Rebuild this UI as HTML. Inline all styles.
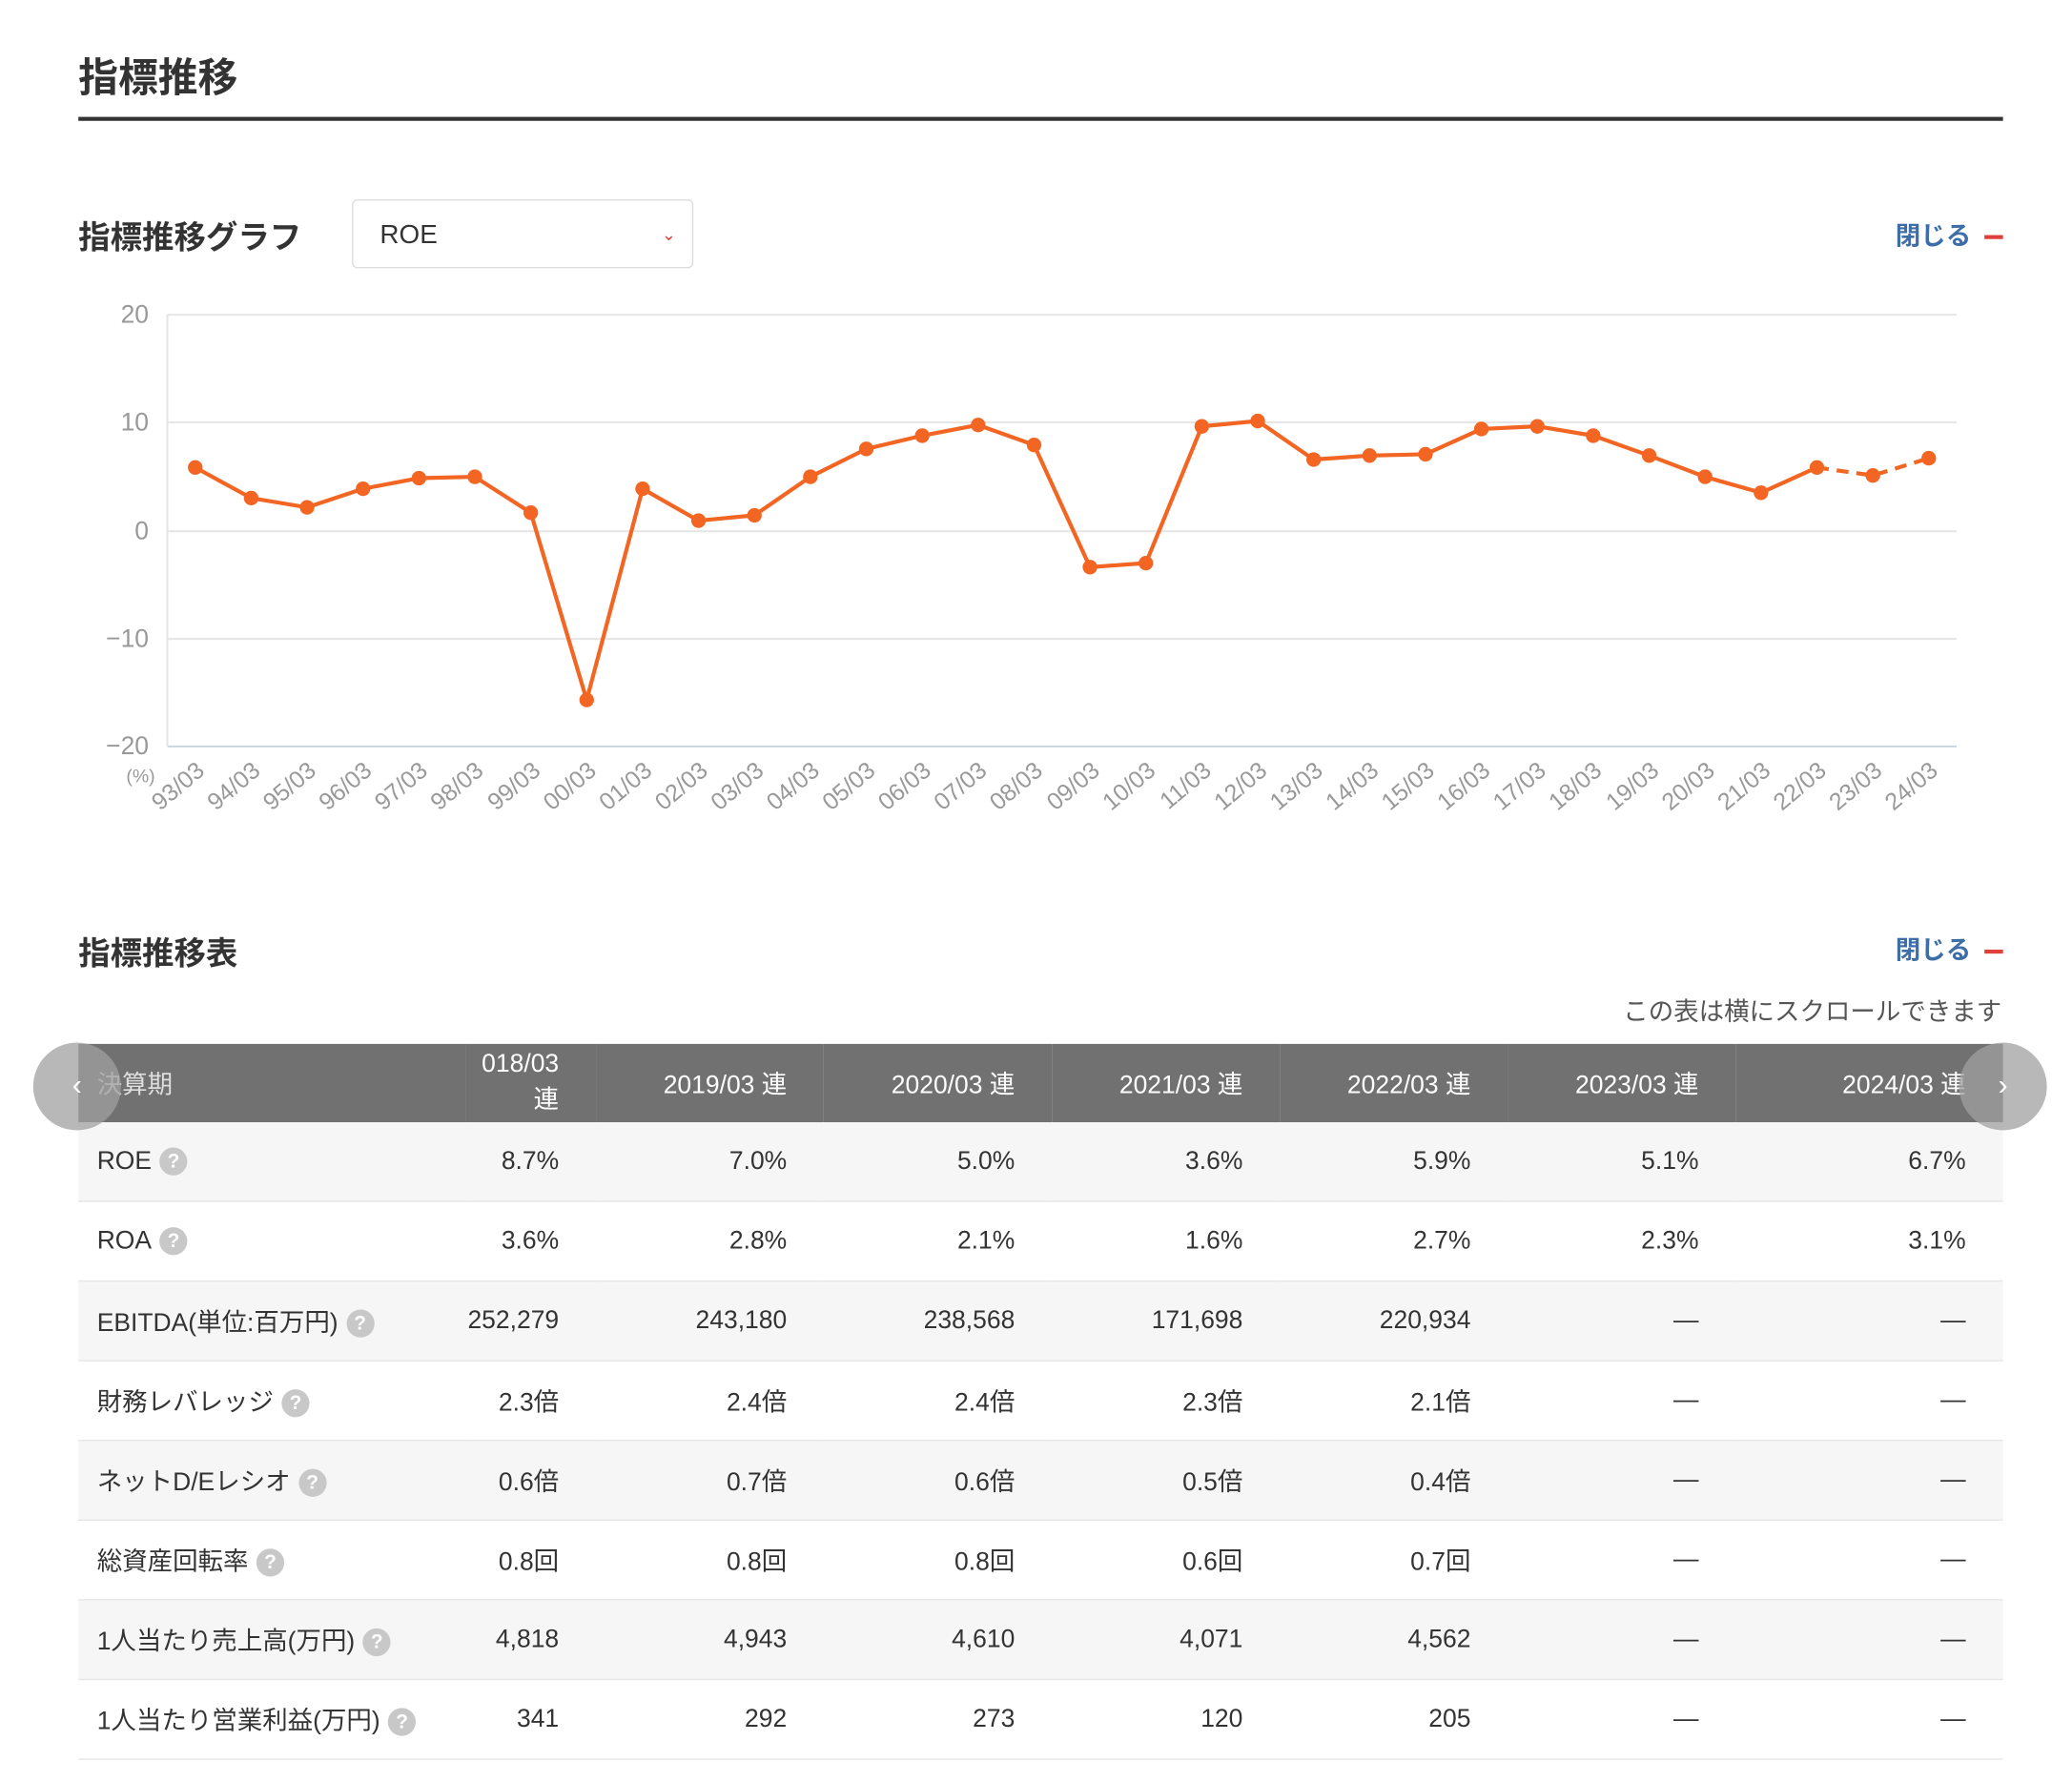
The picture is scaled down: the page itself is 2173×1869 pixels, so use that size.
<!DOCTYPE html>
<html><head><meta charset="utf-8"><style>
html,body{margin:0;padding:0;background:#fff;width:2173px;height:1869px;overflow:hidden}
#w{position:absolute;left:0;top:0;width:1560px;height:1342px;transform:scale(1.393);transform-origin:0 0;font-family:"Liberation Sans","Noto Sans CJK JP",sans-serif;color:#333}
.a{position:absolute;white-space:nowrap}
.h1{left:59px;top:34px;font-size:30px;font-weight:bold;color:#333}
.rule{left:59px;top:88px;width:1449px;height:3px;background:#333}
.h2{font-size:24px;font-weight:bold;color:#333}
.close{font-size:19px;font-weight:bold;color:#3d6ea8}
.close span{display:inline-block;width:14px;height:3px;background:#e0403a;vertical-align:middle;margin-left:10px}
.sel{left:265px;top:150px;width:257px;height:52px;border:1px solid #ddd;border-radius:4px;font-size:20px;line-height:52px;box-sizing:border-box;padding-left:20px;color:#333}
table{position:absolute;left:59px;top:786px;border-collapse:collapse;width:1449px;font-size:19px}
th{background:#717171;color:#fff;font-weight:normal;height:57px;text-align:right;padding-right:28px}
th:first-child{text-align:left;padding-left:14px;color:#ddd}
td{height:57px;text-align:right;padding-right:28px;border-bottom:1px solid #e6e6e6}
td:first-child{text-align:left;padding-left:14px}
tr:nth-child(even) td{background:#f6f6f6}
.q{display:inline-block;width:21px;height:21px;border-radius:50%;background:#c8c8c8;color:#fff;font-size:15px;font-weight:bold;text-align:center;line-height:21px;vertical-align:middle;margin-left:6px}
.nav{width:66px;height:66px;border-radius:50%;background:rgba(160,160,160,.75);top:785px;color:#fff;font-size:22px;line-height:64px;text-align:center}
</style></head><body><div id="w">
<div class="a h1">指標推移</div>
<div class="a rule"></div>
<div class="a h2" style="left:59px;top:159px">指標推移グラフ</div>
<div class="a sel">ROE<span style="position:absolute;right:12px;top:0;color:#e0403a;font-size:13px">&#8964;</span></div>
<div class="a close" style="right:52px;top:163px">閉じる<span></span></div>
<svg class="a" style="left:0;top:220px" width="1560" height="420" viewBox="0 220 1560 420">
<g stroke="#e6e6e6" stroke-width="1.5"><line x1="126" y1="237" x2="1473" y2="237"/><line x1="126" y1="318" x2="1473" y2="318"/><line x1="126" y1="400" x2="1473" y2="400"/><line x1="126" y1="481" x2="1473" y2="481"/></g>
<line x1="126" y1="562" x2="1473" y2="562" stroke="#c9d4e0" stroke-width="1.5"/>
<line x1="126" y1="237" x2="126" y2="562" stroke="#e6e6e6" stroke-width="1.5"/>
<g font-family="Liberation Sans" font-size="19" fill="#999" text-anchor="end"><text x="112" y="243">20</text><text x="112" y="324">10</text><text x="112" y="406">0</text><text x="112" y="487">−10</text><text x="112" y="568">−20</text></g>
<text x="95" y="589" font-size="14" fill="#999" font-family="Liberation Sans">(%)</text>
<polyline fill="none" stroke="#f26522" stroke-width="3" points="147,352 189.1,375 231.2,382 273.3,368 315.4,360 357.5,359 399.6,386 441.7,527 483.8,368 525.9,392 568,388 610.1,359 652.2,338 694.3,328 736.4,320 778.5,335 820.6,427 862.7,424 904.8,321 946.9,317 989,346 1031.1,343 1073.2,342 1115.3,323 1157.4,321 1199.5,328 1241.6,343 1283.7,359 1325.8,371 1367.9,352"/>
<polyline fill="none" stroke="#f26522" stroke-width="3" stroke-dasharray="9,6" points="1367.9,352 1410,358 1452.1,345"/>
<g fill="#f26522"><circle cx="147" cy="352" r="5.5"/><circle cx="189.1" cy="375" r="5.5"/><circle cx="231.2" cy="382" r="5.5"/><circle cx="273.3" cy="368" r="5.5"/><circle cx="315.4" cy="360" r="5.5"/><circle cx="357.5" cy="359" r="5.5"/><circle cx="399.6" cy="386" r="5.5"/><circle cx="441.7" cy="527" r="5.5"/><circle cx="483.8" cy="368" r="5.5"/><circle cx="525.9" cy="392" r="5.5"/><circle cx="568" cy="388" r="5.5"/><circle cx="610.1" cy="359" r="5.5"/><circle cx="652.2" cy="338" r="5.5"/><circle cx="694.3" cy="328" r="5.5"/><circle cx="736.4" cy="320" r="5.5"/><circle cx="778.5" cy="335" r="5.5"/><circle cx="820.6" cy="427" r="5.5"/><circle cx="862.7" cy="424" r="5.5"/><circle cx="904.8" cy="321" r="5.5"/><circle cx="946.9" cy="317" r="5.5"/><circle cx="989" cy="346" r="5.5"/><circle cx="1031.1" cy="343" r="5.5"/><circle cx="1073.2" cy="342" r="5.5"/><circle cx="1115.3" cy="323" r="5.5"/><circle cx="1157.4" cy="321" r="5.5"/><circle cx="1199.5" cy="328" r="5.5"/><circle cx="1241.6" cy="343" r="5.5"/><circle cx="1283.7" cy="359" r="5.5"/><circle cx="1325.8" cy="371" r="5.5"/><circle cx="1367.9" cy="352" r="5.5"/><circle cx="1410" cy="358" r="5.5"/><circle cx="1452.1" cy="345" r="5.5"/></g>
<g font-family="Liberation Sans" font-size="18" fill="#999" text-anchor="end">
<text transform="translate(155,582) rotate(-40)">93/03</text><text transform="translate(197,582) rotate(-40)">94/03</text><text transform="translate(239,582) rotate(-40)">95/03</text><text transform="translate(281,582) rotate(-40)">96/03</text><text transform="translate(323,582) rotate(-40)">97/03</text><text transform="translate(365,582) rotate(-40)">98/03</text><text transform="translate(408,582) rotate(-40)">99/03</text><text transform="translate(450,582) rotate(-40)">00/03</text><text transform="translate(492,582) rotate(-40)">01/03</text><text transform="translate(534,582) rotate(-40)">02/03</text><text transform="translate(576,582) rotate(-40)">03/03</text><text transform="translate(618,582) rotate(-40)">04/03</text><text transform="translate(660,582) rotate(-40)">05/03</text><text transform="translate(702,582) rotate(-40)">06/03</text><text transform="translate(744,582) rotate(-40)">07/03</text><text transform="translate(786,582) rotate(-40)">08/03</text><text transform="translate(829,582) rotate(-40)">09/03</text><text transform="translate(871,582) rotate(-40)">10/03</text><text transform="translate(913,582) rotate(-40)">11/03</text><text transform="translate(955,582) rotate(-40)">12/03</text><text transform="translate(997,582) rotate(-40)">13/03</text><text transform="translate(1039,582) rotate(-40)">14/03</text><text transform="translate(1081,582) rotate(-40)">15/03</text><text transform="translate(1123,582) rotate(-40)">16/03</text><text transform="translate(1165,582) rotate(-40)">17/03</text><text transform="translate(1207,582) rotate(-40)">18/03</text><text transform="translate(1250,582) rotate(-40)">19/03</text><text transform="translate(1292,582) rotate(-40)">20/03</text><text transform="translate(1334,582) rotate(-40)">21/03</text><text transform="translate(1376,582) rotate(-40)">22/03</text><text transform="translate(1418,582) rotate(-40)">23/03</text><text transform="translate(1460,582) rotate(-40)">24/03</text>
</g></svg>
<div class="a h2" style="left:59px;top:698px">指標推移表</div>
<div class="a close" style="right:52px;top:701px">閉じる<span></span></div>
<div class="a" style="right:53px;top:747px;font-size:19px;color:#555">この表は横にスクロールできます</div>
<table>
<colgroup><col style="width:295px"><col style="width:86px"><col style="width:173px"><col style="width:173px"><col style="width:173px"><col style="width:173px"><col style="width:173px"><col style="width:203px"></colgroup>
<tr><th>決算期</th><th>018/03 連</th><th>2019/03 連</th><th>2020/03 連</th><th>2021/03 連</th><th>2022/03 連</th><th>2023/03 連</th><th>2024/03 連</th></tr>
<tr><td>ROE<span class="q">?</span></td><td>8.7%</td><td>7.0%</td><td>5.0%</td><td>3.6%</td><td>5.9%</td><td>5.1%</td><td>6.7%</td></tr>
<tr><td>ROA<span class="q">?</span></td><td>3.6%</td><td>2.8%</td><td>2.1%</td><td>1.6%</td><td>2.7%</td><td>2.3%</td><td>3.1%</td></tr>
<tr><td>EBITDA(単位:百万円)<span class="q">?</span></td><td>252,279</td><td>243,180</td><td>238,568</td><td>171,698</td><td>220,934</td><td>—</td><td>—</td></tr>
<tr><td>財務レバレッジ<span class="q">?</span></td><td>2.3倍</td><td>2.4倍</td><td>2.4倍</td><td>2.3倍</td><td>2.1倍</td><td>—</td><td>—</td></tr>
<tr><td>ネットD/Eレシオ<span class="q">?</span></td><td>0.6倍</td><td>0.7倍</td><td>0.6倍</td><td>0.5倍</td><td>0.4倍</td><td>—</td><td>—</td></tr>
<tr><td>総資産回転率<span class="q">?</span></td><td>0.8回</td><td>0.8回</td><td>0.8回</td><td>0.6回</td><td>0.7回</td><td>—</td><td>—</td></tr>
<tr><td>1人当たり売上高(万円)<span class="q">?</span></td><td>4,818</td><td>4,943</td><td>4,610</td><td>4,071</td><td>4,562</td><td>—</td><td>—</td></tr>
<tr><td>1人当たり営業利益(万円)<span class="q">?</span></td><td>341</td><td>292</td><td>273</td><td>120</td><td>205</td><td>—</td><td>—</td></tr>
</table>
<div class="a nav" style="left:25px">&#8249;</div>
<div class="a nav" style="left:1475px">&#8250;</div>
</div></body></html>
